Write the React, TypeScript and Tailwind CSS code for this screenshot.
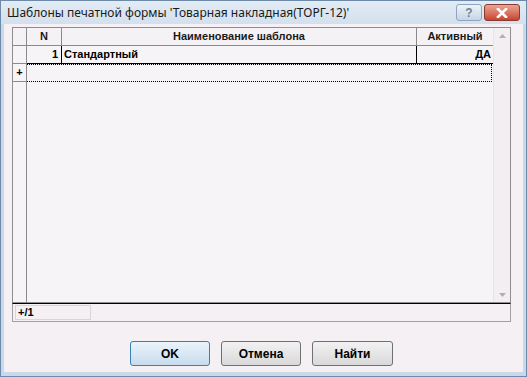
const rows = [{ n: 1, name: "Стандартный", active: "ДА" }];

export default function App() {
  return (
    <div className="w-[527px] h-[377px] bg-[#c9d9ea] border border-[#6d8aa8] flex flex-col overflow-hidden" style={{ fontFamily: "'Liberation Sans', Arial, sans-serif" }}>
      {/* Title bar */}
      <div className="h-[23px] flex items-center justify-between pl-[6px] pr-[6px] bg-gradient-to-b from-[#e3ecf5] to-[#d3e0ed]">
        <span className="text-[12px] text-[#1a1a1a]" style={{ fontFamily: "'Noto Sans', 'Open Sans', sans-serif" }}>
          Шаблоны печатной формы 'Товарная накладная(ТОРГ-12)'
        </span>
        <div className="flex items-start gap-[2px] self-start mt-[3px]">
          <div className="w-[26px] h-[17px] rounded-[3px] border border-[#8fa5bd] bg-gradient-to-b from-[#eef3f8] to-[#c5d5e6] flex items-center justify-center text-[12px] font-bold text-[#6f8399]">?</div>
          <div className="w-[36px] h-[17px] rounded-[3px] border border-[#8a3a2e] bg-gradient-to-b from-[#e9a595] to-[#c7432d] flex items-center justify-center">
            <svg width="12" height="10" viewBox="0 0 12 10">
              <path d="M2 1 L10 9 M10 1 L2 9" stroke="#fff" strokeWidth="2.6" strokeLinecap="square" />
            </svg>
          </div>
        </div>
      </div>

      {/* Body */}
      <div className="flex-1 mx-[3px] mb-[4px] bg-[#f4f0f4] flex flex-col pt-[3px] pl-[8px] pr-[12px]">
        {/* Grid */}
        <div className="h-[276px] border border-[#8e8e8e] bg-[#f7f4f7] flex">
          <div className="flex-1 flex flex-col">
            <div className="flex h-[18px] border-b border-[#8a8a8a] bg-[#f5f2f5] text-[11px] font-bold text-[#1a1a1a]">
              <div className="w-[14px] border-r border-[#8a8a8a]" />
              <div className="w-[35px] border-r border-[#8a8a8a] flex items-center justify-center">N</div>
              <div className="flex-1 border-r border-[#8a8a8a] flex items-center justify-center">Наименование шаблона</div>
              <div className="w-[76px] flex items-center justify-center">Активный</div>
            </div>
            {rows.map((r) => (
              <div key={r.n} className="flex h-[18px] text-[11px] font-bold text-black">
                <div className="w-[14px] border-r border-b border-[#8a8a8a]" />
                <div className="w-[35px] border-r border-b border-black flex items-center justify-end pr-[3px]">{r.n}</div>
                <div className="flex-1 border-r border-b border-black flex items-center pl-[2px]">{r.name}</div>
                <div className="w-[76px] border-b border-black flex items-center justify-end pr-[2px]">{r.active}</div>
              </div>
            ))}
            <div className="flex h-[18px]">
              <div className="w-[14px] border-r border-b border-[#8a8a8a] flex items-center justify-center text-[11px] font-bold text-black">+</div>
              <div className="flex-1 border border-dotted border-black border-l-0 mr-[1px]" />
            </div>
            <div className="w-[14px] flex-1 border-r border-[#8a8a8a]" />
          </div>
          {/* scrollbar */}
          <div className="w-[17px] bg-[#f2eef2] border-l border-[#e8e4e8] flex flex-col justify-between items-center pt-[6px] pb-[5px]">
            <svg width="7" height="4" viewBox="0 0 7 4"><path d="M0 4 L3.5 0 L7 4 Z" fill="#b0b0b0" /></svg>
            <svg width="7" height="4" viewBox="0 0 7 4"><path d="M0 0 L7 0 L3.5 4 Z" fill="#b0b0b0" /></svg>
          </div>
        </div>

        {/* Footer */}
        <div className="h-[19px] border border-[#a0a0a0] border-t-black flex items-center pl-[2px]">
          <div className="w-[76px] h-[15px] border border-[#d8d4d8] text-[11px] font-bold text-black flex items-center pl-[2px]">+/1</div>
        </div>

        {/* Buttons */}
        <div className="flex justify-center gap-[11px] mt-[19px]">
          <button className="w-[80px] h-[25px] rounded-[3px] border border-[#3c7fb1] bg-gradient-to-b from-[#eaf4fb] to-[#c8dcec] text-[12px] font-bold text-black">OK</button>
          <button className="w-[80px] h-[25px] rounded-[3px] border border-[#707070] bg-gradient-to-b from-[#f2f2f2] to-[#d9d9d9] text-[12px] font-bold text-black">Отмена</button>
          <button className="w-[81px] h-[25px] rounded-[3px] border border-[#707070] bg-gradient-to-b from-[#f2f2f2] to-[#d9d9d9] text-[12px] font-bold text-black">Найти</button>
        </div>
      </div>
    </div>
  );
}
